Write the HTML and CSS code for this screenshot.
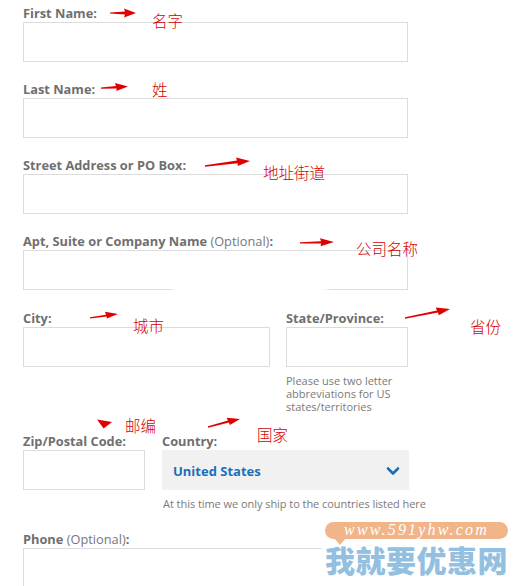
FILE: index.html
```html
<!DOCTYPE html>
<html>
<head>
<meta charset="utf-8">
<link rel="stylesheet" href="styles.css">
</head>
<body>
<div class="page">
  <form class="form">
    <div class="field">
      <label class="label"><b>First Name:</b></label>
      <div class="input full"></div>
    </div>
    <div class="field">
      <label class="label"><b>Last Name:</b></label>
      <div class="input full"></div>
    </div>
    <div class="field">
      <label class="label"><b>Street Address or PO Box:</b></label>
      <div class="input full"></div>
    </div>
    <div class="field field-apt">
      <label class="label"><b>Apt, Suite or Company Name</b> (Optional)<b>:</b></label>
      <div class="input full"></div>
    </div>
    <div class="row row-city">
      <div class="field city">
        <label class="label"><b>City:</b></label>
        <div class="input"></div>
      </div>
      <div class="field state">
        <label class="label"><b>State/Province:</b></label>
        <div class="input"></div>
        <p class="help">Please use two letter abbreviations for US states/territories</p>
      </div>
    </div>
    <div class="row row-zip">
      <div class="field zip">
        <label class="label"><b>Zip/Postal Code:</b></label>
        <div class="input"></div>
      </div>
      <div class="field country">
        <label class="label"><b>Country:</b></label>
        <div class="select">
          <span class="select-value">United States</span>
          <svg class="chevron" width="14" height="10" viewBox="0 0 14 10"><path d="M2 2.5 L7 7.5 L12 2.5" fill="none" stroke="#1b6fb8" stroke-width="2.6" stroke-linecap="round" stroke-linejoin="round"/></svg>
        </div>
        <p class="help help-country">At this time we only ship to the countries listed here</p>
      </div>
    </div>
    <div class="field">
      <label class="label"><b>Phone</b> (Optional)<b>:</b></label>
      <div class="input full"></div>
    </div>
  </form>

  <div class="erase"></div>

  <svg class="arrows" width="522" height="586" viewBox="0 0 522 586">
    <g fill="#e00000">
      <polygon points="110,12.4 125,11.4 124,8.4 136,13 124,17.6 125,14.6 110,13.6"/>
      <polygon points="101,87.4 116,86 115,83 128,86.5 116.4,91 116.6,88.4 101,88.8"/>
      <polygon points="205,165.3 237,160.6 236,157.6 250,161 237.8,166 237.6,163.2 205,166.8"/>
      <polygon points="300,242.3 321,241.2 320,238.2 334,242 320.6,246.2 321,243.6 300,243.6"/>
      <polygon points="90,317.2 106,314.8 105,311.8 118,314 106.8,318.6 106.6,316.4 90,318.6"/>
      <polygon points="405,317.2 437,310.6 435.8,307.6 450,309 438.8,315.2 438,312.4 405,318.8"/>
      <polygon points="97,419.6 112,422 103.6,428.6"/>
      <polygon points="208,426.2 228,420.6 226.6,417.8 240,419 229.8,425 229,422.4 208,427.8"/>
    </g>
  </svg>

  <span class="note n1">名字</span>
  <span class="note n2">姓</span>
  <span class="note n3">地址街道</span>
  <span class="note n4">公司名称</span>
  <span class="note n5">城市</span>
  <span class="note n6">省份</span>
  <span class="note n7">邮编</span>
  <span class="note n8">国家</span>

  <div class="watermark">
    <div class="wm-name">我就要优惠网</div>
    <div class="wm-pill">www.591yhw.com</div>
    <div class="wm-tail"></div>
  </div>
</div>
</body>
</html>
```

FILE: styles.css
```css
* { box-sizing: border-box; }
html, body { margin: 0; padding: 0; background: #fff; }
body { width: 522px; height: 586px; overflow: hidden; }

.page {
  position: relative;
  width: 522px;
  height: 586px;
  overflow: hidden;
  font-family: "Open Sans", "Liberation Sans", sans-serif;
}

.form {
  padding: 4px 0 0 23px;
  display: flex;
  flex-direction: column;
}

.field { margin-bottom: 18px; display: flex; flex-direction: column; }
.field-apt { margin-bottom: 19px; }

.label {
  display: block;
  height: 18px;
  line-height: 18px;
  font-size: 12.8px;
  color: #777;
  font-weight: 400;
  white-space: nowrap;
}
.label b { font-weight: 700; color: #6f6f6f; }

.input {
  height: 40px;
  border: 1px solid #dcdcdc;
  background: #fff;
}
.full { width: 385px; }

.row { display: flex; align-items: flex-start; }
.row .field { margin-bottom: 0; }
.row-city { gap: 16px; margin-bottom: 19px; }
.row-zip { gap: 17px; margin-bottom: 20px; }

.city { width: 247px; }
.state { width: 122px; }
.zip { width: 122px; }
.country { width: 247px; }

.help {
  margin: 7px 0 0 0;
  font-size: 11px;
  line-height: 13px;
  color: #7a7a7a;
  letter-spacing: 0;
}
.help-country { margin-top: 7px; padding-left: 1px; white-space: nowrap; letter-spacing: -0.05px; height: 13px; }

.select {
  height: 40px;
  background: #f1f1f1;
  display: flex;
  align-items: center;
  justify-content: space-between;
  padding: 2px 9px 0 11px;
}
.select-value {
  font-size: 13px;
  font-weight: 700;
  color: #1b6fb8;
}
.chevron { display: block; }

.erase {
  position: absolute;
  left: 172px;
  top: 262px;
  width: 155px;
  height: 48px;
  background: #fff;
  border-radius: 20px;
  filter: blur(3px);
}

.arrows { position: absolute; left: 0; top: 0; pointer-events: none; }

.note {
  position: absolute;
  font-family: "Noto Sans CJK SC", sans-serif;
  font-size: 15.5px;
  line-height: 16px;
  color: #d40000;
  font-weight: 300;
  white-space: nowrap;
}
.n1 { left: 152px; top: 12px; }
.n2 { left: 152px; top: 81px; }
.n3 { left: 263px; top: 164px; }
.n4 { left: 356px; top: 240px; }
.n5 { left: 133px; top: 317px; }
.n6 { left: 470px; top: 318px; }
.n7 { left: 125px; top: 417px; }
.n8 { left: 257px; top: 426px; }

.watermark {
  position: absolute;
  left: 322px;
  top: 521px;
  width: 200px;
  height: 65px;
}
.wm-pill {
  position: absolute;
  left: 3px;
  top: 1px;
  width: 183px;
  height: 17px;
  border-radius: 9px;
  background: #f2b489;
  color: #fff;
  font-family: "Liberation Serif", serif;
  font-style: italic;
  font-size: 16px;
  line-height: 16px;
  letter-spacing: 2.2px;
  text-align: center;
}
.wm-tail {
  position: absolute;
  left: 12px;
  top: 17px;
  width: 0;
  height: 0;
  border-left: 6px solid transparent;
  border-right: 6px solid transparent;
  border-top: 7px solid #f2b489;
}
.wm-name {
  position: absolute;
  left: 0;
  top: 19px;
  width: 200px;
  height: 46px;
  background: #fff;
  padding: 4px 0 0 3px;
  font-family: "Noto Sans CJK SC", sans-serif;
  font-weight: 900;
  font-size: 30px;
  line-height: 30px;
  letter-spacing: 0.5px;
  color: #93c0e1;
  white-space: nowrap;
}
```
